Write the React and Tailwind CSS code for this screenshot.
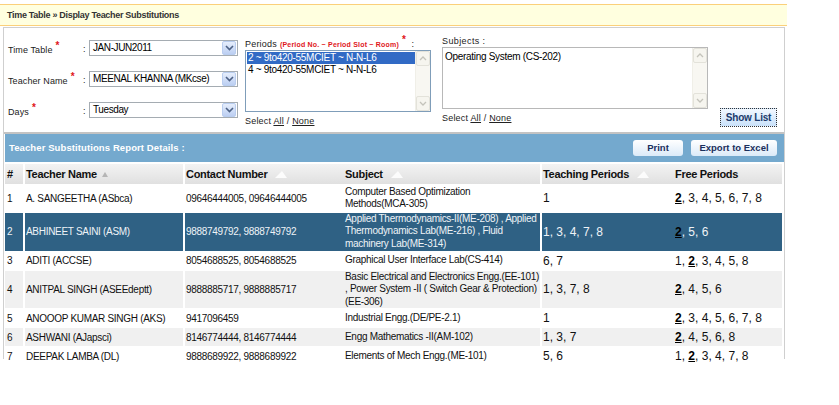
import React from 'react';

const rows = [
  { n: 1, name: 'A. SANGEETHA (ASbca)', contact: '09646444005, 09646444005', subject: ['Computer Based Optimization', 'Methods(MCA-305)'], teach: '1', free: [2, 3, 4, 5, 6, 7, 8], h: 'h-[28px]' },
  { n: 2, name: 'ABHINEET SAINI (ASM)', contact: '9888749792, 9888749792', subject: ['Applied Thermodynamics-II(ME-208) , Applied', 'Thermodynamics Lab(ME-216) , Fluid', 'machinery Lab(ME-314)'], teach: '1, 3, 4, 7, 8', free: [2, 5, 6], h: 'h-[39px]', selected: true },
  { n: 3, name: 'ADITI (ACCSE)', contact: '8054688525, 8054688525', subject: ['Graphical User Interface Lab(CS-414)'], teach: '6, 7', free: [1, 2, 3, 4, 5, 8], h: 'h-[17px]' },
  { n: 4, name: 'ANITPAL SINGH (ASEEdeptt)', contact: '9888885717, 9888885717', subject: ['Basic Electrical and Electronics Engg.(EE-101)', ', Power System -II ( Switch Gear & Protection)', '(EE-306)'], teach: '1, 3, 7, 8', free: [2, 4, 5, 6], h: 'h-[38px]' },
  { n: 5, name: 'ANOOOP KUMAR SINGH (AKS)', contact: '9417096459', subject: ['Industrial Engg.(DE/PE-2.1)'], teach: '1', free: [2, 3, 4, 5, 6, 7, 8], h: 'h-[17px]' },
  { n: 6, name: 'ASHWANI (AJapsci)', contact: '8146774444, 8146774444', subject: ['Engg Mathematics -II(AM-102)'], teach: '1, 3, 7', free: [2, 4, 5, 6, 8], h: 'h-[17px]' },
  { n: 7, name: 'DEEPAK LAMBA (DL)', contact: '9888689922, 9888689922', subject: ['Elements of Mech Engg.(ME-101)'], teach: '5, 6', free: [1, 2, 3, 4, 7, 8], h: 'h-[16px]' },
];

const Chevron = () => (
  <svg width="9" height="6" viewBox="0 0 9 6">
    <path d="M1 1 L4.5 4.5 L8 1" fill="none" stroke="#4d6185" strokeWidth="1.6" />
  </svg>
);

const Select = ({ value }) => (
  <div className="flex items-center w-[149px] h-[16px] border border-[#a5acb2] bg-white">
    <span className="flex-1 pl-[3px] text-[10px] tracking-[-0.4px] text-black leading-none whitespace-nowrap">{value}</span>
    <div className="w-[14px] h-[14px] mr-[1px] flex items-center justify-center rounded-[2px] border border-[#b9cdef] bg-gradient-to-b from-[#e6eefc] to-[#bccff2]">
      <Chevron />
    </div>
  </div>
);

const ScrollBar = () => (
  <div className="w-[15px] h-full flex flex-col justify-between bg-[#f8f7f2] border-l border-[#f0efe8]">
    <div className="h-[15px] flex items-center justify-center rounded-[2px] border border-[#e3e2da] bg-[#f6f5ef]">
      <svg width="8" height="5" viewBox="0 0 8 5"><path d="M1 4 L4 1 L7 4" fill="none" stroke="#c4c3bb" strokeWidth="1.3" /></svg>
    </div>
    <div className="h-[15px] flex items-center justify-center rounded-[2px] border border-[#e3e2da] bg-[#f6f5ef]">
      <svg width="8" height="5" viewBox="0 0 8 5"><path d="M1 1 L4 4 L7 1" fill="none" stroke="#c4c3bb" strokeWidth="1.3" /></svg>
    </div>
  </div>
);

const Req = () => <span className="text-[#e0161b] text-[10px] font-bold relative -top-[4px] ml-[3px]">*</span>;

const FormRow = ({ label, value }) => (
  <div className="flex items-center h-[16px]">
    <div className="w-[75px] text-[9px] text-[#222] tracking-[0.1px] whitespace-nowrap pt-[3px]">
      {label}
      <Req />
    </div>
    <span className="text-[9px] text-[#222] w-[6px] pt-[3px]">:</span>
    <Select value={value} />
  </div>
);

const SelectAll = () => (
  <div className="text-[9px] text-[#222] tracking-[0.2px] whitespace-nowrap">
    Select <span className="underline">All</span> / <span className="underline">None</span>
  </div>
);

const SortIcon = () => (
  <svg width="12" height="7" viewBox="0 0 12 7" className="ml-[8px] inline-block">
    <polygon points="0,7 12,7 7,0" fill="#ffffff" opacity="0.85" />
  </svg>
);

const FreeList = ({ items }) => (
  <span>
    {items.map((p, i) => (
      <span key={i}>
        {p === 2 ? <span className="font-bold underline text-black">2</span> : p}
        {i < items.length - 1 ? ', ' : ''}
      </span>
    ))}
  </span>
);

export default function App() {
  return (
    <div className="w-[839px] h-[405px] bg-white font-['Liberation_Sans',Arial,sans-serif] pt-[4px] overflow-hidden">
      {/* breadcrumb */}
      <div className="w-[787px] h-[22px] border-t border-b border-[#fbd07a] bg-[#ffffdf] flex items-center pl-[7px] pt-[1px]">
        <span className="text-[9px] font-bold text-[#333] tracking-[-0.3px]">Time Table » Display Teacher Substitutions</span>
      </div>

      <div className="mt-[1px] ml-[3px] w-[782px] h-[332px] border-l border-r border-t border-[#cfcfcf]">
        {/* filter form */}
        <div className="h-[106px] border-b-2 border-[#c3c3c3] flex pl-[4px]">
          <div className="w-[233px] flex flex-col gap-[15px] pt-[12px]">
            <FormRow label="Time Table" value="JAN-JUN2011" />
            <FormRow label="Teacher Name" value="MEENAL KHANNA (MKcse)" />
            <FormRow label="Days" value="Tuesday" />
          </div>

          <div className="ml-[4px] w-[186px] pt-[8px]">
            <div className="text-[9px] text-[#222] tracking-[0.2px] whitespace-nowrap h-[14px]">
              Periods
              <span className="text-[#e0161b] font-bold text-[7px] ml-[3px]">(Period No. ~ Period Slot ~ Room)</span>
              <Req /> &nbsp;:
            </div>
            <div className="h-[62px] border border-[#7f9db9] flex bg-white">
              <div className="flex-1 pt-[1px] pl-[1px] text-[10px] tracking-[-0.3px] leading-[12px]">
                <div className="bg-[#316ac5] text-white pl-[1px]">2 ~ 9to420-55MCIET ~ N-N-L6</div>
                <div className="text-black pl-[1px]">4 ~ 9to420-55MCIET ~ N-N-L6</div>
              </div>
              <ScrollBar />
            </div>
            <div className="mt-[3px]"><SelectAll /></div>
          </div>

          <div className="ml-[11px] w-[266px] pt-[7px]">
            <div className="text-[9px] text-[#222] tracking-[0.4px] h-[12px]">Subjects :</div>
            <div className="h-[62px] border border-[#b8b8b8] flex bg-white">
              <div className="flex-1 pt-[3px] pl-[2px] text-[10px] tracking-[-0.3px] leading-[12px] text-black">Operating System (CS-202)</div>
              <ScrollBar />
            </div>
            <div className="mt-[3px]"><SelectAll /></div>
          </div>

          <div className="ml-[12px] pt-[80px]">
            <div className="w-[57px] h-[19px] border border-dotted border-[#333] flex items-center justify-center bg-gradient-to-b from-[#f2f8ff] to-[#c9e1fa] text-[10px] font-bold text-[#1b3a6b] tracking-[-0.2px]">
              Show List
            </div>
          </div>
        </div>

        {/* report band */}
        <div className="ml-[1px] w-[779px] h-[28px] bg-[#74a9ce] flex items-center pl-[4px] pr-[7px]">
          <span className="flex-1 text-[9.5px] font-bold text-white tracking-[0.1px]">Teacher Substitutions Report Details :</span>
          <div className="w-[50px] h-[16px] rounded-[3px] bg-gradient-to-b from-white to-[#dbeaf8] flex items-center justify-center text-[9.5px] font-bold text-[#1b2f5c]">Print</div>
          <div className="ml-[8px] w-[86px] h-[16px] rounded-[3px] bg-gradient-to-b from-white to-[#dbeaf8] flex items-center justify-center text-[9.5px] font-bold text-[#1b2f5c]">Export to Excel</div>
        </div>

        {/* table */}
        <table className="mt-[2px] ml-[1px] w-[777px] table-fixed border-collapse text-[10px] tracking-[-0.3px] text-[#111]">
          <colgroup>
            <col className="w-[19px]" />
            <col className="w-[160px]" />
            <col className="w-[156px]" />
            <col className="w-[201px]" />
            <col className="w-[128px]" />
            <col className="w-[113px]" />
          </colgroup>
          <thead>
            <tr className="h-[20px] bg-gradient-to-b from-[#f3f3f3] to-[#e0e0e0] text-[11px] font-bold text-[#111] text-left">
              <th className="pl-[2px] font-bold">#</th>
              <th className="pl-[1px] font-bold border-l-2 border-white">
                Teacher Name
                <svg width="6" height="5" viewBox="0 0 6 5" className="inline-block ml-[5px] mb-[1px]"><polygon points="0,5 6,5 3,0" fill="#b5b5b5" /></svg>
              </th>
              <th className="pl-[1px] font-bold border-l-2 border-white">Contact Number<SortIcon /></th>
              <th className="pl-[5px] font-bold">Subject<SortIcon /></th>
              <th className="pl-[1px] font-bold border-l-2 border-white">Teaching Periods<SortIcon /></th>
              <th className="pl-[6px] font-bold">Free Periods</th>
            </tr>
          </thead>
          <tbody>
            {rows.map((r, i) => (
              <tr
                key={r.n}
                className={`${r.h} border-t border-white ${r.selected ? 'bg-[#2f6184] text-[#eef3f7]' : i % 2 === 1 ? 'bg-[#f0f0f0]' : 'bg-white'}`}
              >
                <td className="pl-[2px] align-middle">{r.n}</td>
                <td className="pl-[1px] align-middle border-l-2 border-white whitespace-nowrap">{r.name}</td>
                <td className="pl-[1px] align-middle border-l-2 border-white whitespace-nowrap">{r.contact}</td>
                <td className="pl-[5px] align-middle leading-[12.5px] whitespace-nowrap">
                  {r.subject.map((s, k) => <div key={k}>{s}</div>)}
                </td>
                <td className="pl-[1px] align-middle border-l-2 border-white text-[12px] tracking-[0px] whitespace-nowrap">{r.teach}</td>
                <td className="pl-[6px] align-middle text-[12px] tracking-[0px] whitespace-nowrap">
                  <FreeList items={r.free} />
                </td>
              </tr>
            ))}
          </tbody>
        </table>
      </div>
    </div>
  );
}
